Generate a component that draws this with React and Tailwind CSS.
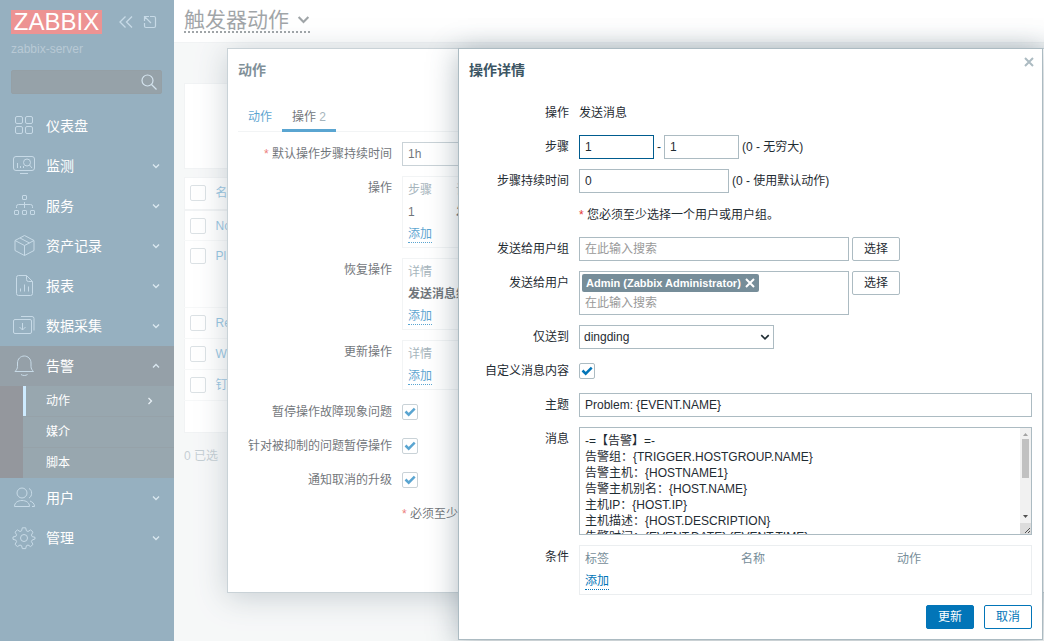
import clsx from "clsx";

const MENU = [
  { id: "dashboard", label: "仪表盘" },
  { id: "monitoring", label: "监测", expandable: true },
  { id: "services", label: "服务", expandable: true },
  { id: "inventory", label: "资产记录", expandable: true },
  { id: "reports", label: "报表", expandable: true },
  { id: "collection", label: "数据采集", expandable: true },
  {
    id: "alerts",
    label: "告警",
    expandable: true,
    children: ["动作", "媒介", "脚本"],
  },
  { id: "users", label: "用户", expandable: true },
  { id: "admin", label: "管理", expandable: true },
];

const ACTION_ROWS = [
  { name: "No" },
  { name: "Pl", tall: true },
  { name: "Re" },
  { name: "W" },
  { name: "钉" },
];

const MESSAGE = `-=【告警】=-
告警组：{TRIGGER.HOSTGROUP.NAME}
告警主机：{HOSTNAME1}
告警主机别名：{HOST.NAME}
主机IP：{HOST.IP}
主机描述：{HOST.DESCRIPTION}
告警时间：{EVENT.DATE} {EVENT.TIME}




`;

const INPUT = "h-6 border border-[#acbbc2] bg-white px-[5px] outline-none";

const ICON_SHAPES = {
  dashboard: (
    <>
      <rect x="3.5" y="2.5" width="7" height="7" rx="1.5" />
      <rect x="13.5" y="2.5" width="7" height="7" rx="1.5" />
      <rect x="3.5" y="12.5" width="7" height="7" rx="1.5" />
      <rect x="13.5" y="12.5" width="7" height="7" rx="1.5" />
    </>
  ),
  monitoring: (
    <>
      <rect x="1.5" y="2.5" width="21" height="14" rx="2.5" />
      <circle cx="15" cy="8.5" r="3.5" />
      <path d="M17.5 11l2.5 3M5.500 9v5M8.500 12v2M11.500 12v2M8 19.500h8" />
    </>
  ),
  services: (
    <>
      <rect x="10.5" y="1.500" width="4" height="4" rx="0.5" />
      <rect x="2.5" y="16.500" width="4" height="4" rx="0.5" />
      <rect x="10.5" y="16.500" width="4" height="4" rx="0.5" />
      <rect x="18.5" y="16.500" width="4" height="4" rx="0.5" />
      <path d="M12.500 8v6M4.500 14v-1.500a2 2 0 0 1 2-2h12a2 2 0 0 1 2 2V14" />
    </>
  ),
  inventory: (
    <path d="M12.500 1.500l9.500 5v10l-9.500 5-9.500-5v-10zM3 6.500l9.500 5 9.500-5M12.500 11.500v10M8 4l9.500 5" />
  ),
  reports: (
    <>
      <path d="M6.500 1.500h8l6 6v12a2 2 0 0 1-2 2h-12a2 2 0 0 1-2-2v-16a2 2 0 0 1 2-2z" />
      <path d="M14.500 1.500v4a2 2 0 0 0 2 2h4M8.500 14.500v3M12.500 10.500v7M16.500 12.500v5" />
    </>
  ),
  collection: (
    <>
      <rect x="1.500" y="5.500" width="18" height="14" rx="1.500" />
      <path d="M9 2.500h11a2 2 0 0 1 2 2v12M10.500 9v7M7.500 13l3 3 3-3" />
    </>
  ),
  alerts: (
    <path d="M3 17.500h18.500c-1.500-1.500-2.500-3-2.500-5V9c0-4-3-7-6.750-7S5.500 5 5.500 9v3.500c0 2-1 3.500-2.500 5zM9 20.500c1.500 1.300 5 1.300 6.500 0" />
  ),
  users: (
    <>
      <circle cx="10" cy="7" r="5" />
      <path d="M2.500 20.500h15c0-4-3.500-6-7.500-6s-7.500 2-7.500 6zM17 2.500c3.500 1.500 3.500 8 0 9.500M18 15c2.500 1 4.500 2.500 4.500 5.500h-2.500" />
    </>
  ),
  admin: (
    <>
      <circle cx="12" cy="12" r="3.500" />
      <path d="M10.300 1.800h3.400l.7 3 1.600.7 2.700-1.600 2.300 2.300L19.400 9l.7 1.600 2.900.7v1.600l-2.900 1.200-.7 1.500 1.600 2.700-2.400 2.300-2.600-1.600-1.600.7-.7 2.900h-3.400l-.7-2.900-1.600-.7-2.600 1.600L3 18.300l1.600-2.700-.7-1.500L1 13.300v-2.300l2.900-.7L4.600 8.800 3 6.200l2.400-2.300L8 5.500l1.600-.7z" />
    </>
  ),
};

function MenuIcon({ name }) {
  return (
    <svg
      viewBox="0 0 24 24"
      className="size-6 shrink-0 fill-none stroke-[#7daac8]"
      strokeLinejoin="round"
      aria-hidden="true"
    >
      {ICON_SHAPES[name]}
    </svg>
  );
}

function Chevron({ className }) {
  return (
    <svg
      viewBox="0 0 8 8"
      className={clsx("fill-none stroke-current", className)}
      strokeWidth="1.3"
      aria-hidden="true"
    >
      <path d="M1 2.500l3 3 3-3" />
    </svg>
  );
}

function Checkbox({ checked = false, ...props }) {
  return (
    <span className="grid size-4 shrink-0">
      <input
        type="checkbox"
        defaultChecked={checked}
        className="peer col-start-1 row-start-1 size-4 appearance-none rounded-xs border border-[#acbbc2] bg-white"
        {...props}
      />
      <svg
        viewBox="0 0 16 16"
        className="pointer-events-none invisible col-start-1 row-start-1 size-4 fill-none stroke-[#0275b8] peer-checked:visible"
        strokeWidth="2.500"
        aria-hidden="true"
      >
        <path d="M3.500 7.500l3.200 3.200 6-6" />
      </svg>
    </span>
  );
}

function Sidebar() {
  return (
    <aside className="flex w-[174px] shrink-0 flex-col bg-[#0a466a] text-white">
      <div className="flex items-center px-[11px] pt-[10px]">
        <a
          href="#home"
          className="flex h-6 w-[91px] items-center justify-center bg-[#d40000] text-2xl leading-6"
        >
          ZABBIX
        </a>
        <button type="button" className="ml-4" aria-label="收起菜单">
          <svg viewBox="0 0 16 16" className="size-4 fill-none stroke-[#7daac8]" strokeWidth="1.300">
            <path d="M7.500 2.500L2 8l5.500 5.500M14 2.500L8.500 8l5.500 5.500" />
          </svg>
        </button>
        <button type="button" className="ml-2" aria-label="隐藏菜单">
          <svg viewBox="0 0 16 16" className="size-4 fill-none stroke-[#7daac8]" strokeWidth="1.200">
            <path d="M8 2.500h4a1.500 1.500 0 0 1 1.500 1.500v8a1.500 1.500 0 0 1-1.500 1.500H4a1.500 1.500 0 0 1-1.500-1.500V9M9 9L3 3M2.500 7V2.500H7" />
          </svg>
        </button>
      </div>
      <div className="mt-[7px] px-[11px] text-[#59829e]">zabbix-server</div>
      <form className="mt-[13px] mr-3 mb-3 ml-[11px] flex h-6 items-center rounded-xs border border-[#05202f] bg-[#082436] pr-1">
        <input type="text" aria-label="搜索" className="min-w-0 flex-1 bg-transparent px-2 outline-none" />
        <button type="button" aria-label="搜索">
          <svg viewBox="0 0 16 16" className="size-4 fill-none stroke-[#9cc0d8]" strokeWidth="1.200">
            <circle cx="6.500" cy="6.500" r="5.500" />
            <path d="M10.500 10.500l5 5" />
          </svg>
        </button>
      </form>
      <nav>
        <ul>
          {MENU.map((item) => (
            <li key={item.id}>
              <a
                href={`#${item.id}`}
                className={clsx(
                  "flex h-10 items-center pr-[14px] pl-3 text-sm",
                  item.children && "bg-[#072134]"
                )}
              >
                <MenuIcon name={item.id} />
                <span className="ml-2.5 flex-1">{item.label}</span>
                {item.expandable && (
                  <Chevron className={clsx("size-2 text-[#a9c9dd]", item.children && "rotate-180")} />
                )}
              </a>
              {item.children && (
                <ul className="divide-y divide-[#0a2436] border-l-[23px] border-[#040b19] bg-[#0e3144]">
                  {item.children.map((child, index) => (
                    <li key={child}>
                      <a
                        href={`#${item.id}-${index}`}
                        className={clsx(
                          "flex h-[30px] items-center border-l-3 pr-5 pl-5",
                          index === 0 ? "border-[#8cd2ff]" : "border-transparent"
                        )}
                      >
                        <span className="flex-1">{child}</span>
                        {index === 0 && <Chevron className="size-2 -rotate-90 text-[#c9dde9]" />}
                      </a>
                    </li>
                  ))}
                </ul>
              )}
            </li>
          ))}
        </ul>
      </nav>
    </aside>
  );
}

function ActionsPage() {
  return (
    <main className="min-w-0 flex-1">
      <header className="flex h-[43px] items-start border-b border-[#dfe4e7] bg-white px-[10px] pt-2">
        <button
          type="button"
          className="flex h-[25px] items-center gap-2 border-b-2 border-dotted border-[#1f2c33] text-[21px]"
        >
          <h1>触发器动作</h1>
          <Chevron className="size-[13px]" />
        </button>
      </header>
      <div className="px-[10px] pt-10">
        <div className="h-[86px] border border-[#dfe4e7] bg-white" />
        <table className="mt-2 w-full border border-[#dfe4e7] bg-white text-left">
          <thead>
            <tr className="h-8 border-b-2 border-[#dfe4e7] text-[#0275b8]">
              <th className="w-[26px] pl-[5px] font-normal">
                <Checkbox aria-label="全选" />
              </th>
              <th className="pl-[5px] font-normal">名称</th>
            </tr>
          </thead>
          <tbody>
            {ACTION_ROWS.map((row) => (
              <tr
                key={row.name}
                className={clsx(
                  "border-b border-[#ebeef0] align-top text-[#0275b8]",
                  row.tall ? "h-[67px]" : "h-[31px]"
                )}
              >
                <td className="pt-[7px] pl-[5px]">
                  <Checkbox aria-label={row.name} />
                </td>
                <td className="pt-[7px] pl-[5px]">{row.name}</td>
              </tr>
            ))}
            <tr className="h-8">
              <td colSpan={2} />
            </tr>
          </tbody>
        </table>
        <div className="mt-[15px] text-[#768d99]">0 已选</div>
      </div>
    </main>
  );
}

function Overlay() {
  return <div className="absolute inset-0 bg-white/35" />;
}

function Dialog({ title, className, children }) {
  return (
    <section
      role="dialog"
      aria-label={title}
      className={clsx(
        "absolute top-12 border border-[#acbbc2] bg-white px-[10px] pt-[11px] pb-[10px] shadow-[0_4px_28px_rgba(60,85,99,0.4)]",
        className
      )}
    >
      <h4 className="text-sm leading-5 font-bold text-[#3c5563]">{title}</h4>
      {children}
    </section>
  );
}

function Row({ label, htmlFor, required, children }) {
  return (
    <>
      <label htmlFor={htmlFor} className="text-right leading-6">
        {required && <span className="text-[#e33734]">* </span>}
        {label}
      </label>
      <div className="flex min-h-6 min-w-0 items-center gap-[3px]">{children}</div>
    </>
  );
}

function OperationsTable({ columns, rows = [] }) {
  return (
    <div className="flex-1 border border-[#ebeef0] px-[5px] py-0.5">
      <table className="w-full table-fixed text-left leading-4">
        <thead>
          <tr className="h-[22px] text-[#768d99]">
            {columns.map((column) => (
              <th key={column.label} className={clsx("font-normal whitespace-nowrap", column.className)}>
                {column.label}
              </th>
            ))}
          </tr>
        </thead>
        <tbody>
          {rows.map((cells) => (
            <tr key={cells.join()} className="h-[22px]">
              {cells.map((cell, index) => (
                <td
                  key={cell}
                  className={clsx("whitespace-nowrap", index === cells.length - 1 && "font-bold")}
                >
                  {cell}
                </td>
              ))}
            </tr>
          ))}
          <tr className="h-[22px]">
            <td>
              <button type="button" className="border-b border-dotted border-[#0275b8] leading-[15px] text-[#0275b8]">
                添加
              </button>
            </td>
          </tr>
        </tbody>
      </table>
    </div>
  );
}

function ActionDialog() {
  return (
    <Dialog title="动作" className="left-[227px] w-[827px]">
      <div className="mt-[21px] flex border-b border-[#ebeef0]">
        <a href="#action" className="px-[10px] pt-2 pb-1.5 leading-4 text-[#0275b8]">
          动作
        </a>
        <a href="#operations" className="-mb-px border-b-3 border-[#0275b8] px-[10px] pt-2 pb-1 leading-4">
          操作 <span className="text-[#768d99]">2</span>
        </a>
      </div>
      <form className="mt-[10px] grid grid-cols-[154px_1fr] gap-[10px]">
        <Row label="默认操作步骤持续时间" htmlFor="default-duration" required>
          <input id="default-duration" defaultValue="1h" className={clsx(INPUT, "w-[150px]")} />
        </Row>
        <Row label="操作">
          <OperationsTable
            columns={[
              { label: "步骤", className: "w-12" },
              { label: "详情" },
            ]}
            rows={[["1", "发"]]}
          />
        </Row>
        <Row label="恢复操作">
          <OperationsTable columns={[{ label: "详情" }]} rows={[["发送消息给"]]} />
        </Row>
        <Row label="更新操作">
          <OperationsTable columns={[{ label: "详情" }]} />
        </Row>
        <Row label="暂停操作故障现象问题" htmlFor="pause-symptoms">
          <Checkbox id="pause-symptoms" checked />
        </Row>
        <Row label="针对被抑制的问题暂停操作" htmlFor="pause-suppressed">
          <Checkbox id="pause-suppressed" checked />
        </Row>
        <Row label="通知取消的升级" htmlFor="notify-canceled">
          <Checkbox id="notify-canceled" checked />
        </Row>
        <p className="col-start-2 leading-6">
          <span className="text-[#e33734]">*</span> 必须至少
        </p>
      </form>
      <div className="mt-8 flex justify-end">
        <button type="button" className="h-6 w-12 rounded-xs border border-[#0275b8] text-[#0275b8]">
          取消
        </button>
      </div>
    </Dialog>
  );
}

function SelectButton({ label }) {
  return (
    <button
      type="button"
      aria-label={label}
      className="h-6 w-12 shrink-0 self-start rounded-xs border border-[#acbbc2] bg-white"
    >
      选择
    </button>
  );
}

function ScrollTrack() {
  return (
    <div className="flex w-[11px] flex-col items-center bg-[#f1f1f1]" aria-hidden="true">
      <svg viewBox="0 0 11 11" className="h-[11px] w-[11px] shrink-0 fill-[#a3a3a3]">
        <path d="M3 8l2.500-3L8 8z" />
      </svg>
      <div className="h-[39px] w-[7px] bg-[#c1c1c1]" />
      <svg viewBox="0 0 11 11" className="mt-auto h-[11px] w-[11px] shrink-0 fill-[#505050]">
        <path d="M3 3l2.500 3L8 3z" />
      </svg>
      <svg viewBox="0 0 11 11" className="h-[11px] w-[11px] shrink-0 bg-[#dcdcdc] stroke-[#505050]">
        <path d="M5 10l5-5M8 10l2-2" />
      </svg>
    </div>
  );
}

function OperationDialog() {
  return (
    <Dialog title="操作详情" className="right-px w-[585px]">
      <button type="button" aria-label="关闭" className="absolute top-2 right-2 text-[#acbbc2]">
        <svg viewBox="0 0 10 10" className="size-[10px] fill-none stroke-current" strokeWidth="2">
          <path d="M1 1l8 8M9 1L1 9" />
        </svg>
      </button>
      <form className="mt-[21px] grid grid-cols-[100px_1fr] gap-[10px]">
        <Row label="操作">发送消息</Row>
        <Row label="步骤" htmlFor="step-from">
          <input id="step-from" defaultValue="1" className="h-6 w-[75px] border border-[#005c8f] bg-white px-[5px] outline-none" />
          -
          <input aria-label="步骤至" defaultValue="1" className={clsx(INPUT, "w-[75px]")} />
          (0 - 无穷大)
        </Row>
        <Row label="步骤持续时间" htmlFor="step-duration">
          <input id="step-duration" defaultValue="0" className={clsx(INPUT, "w-[150px]")} />
          (0 - 使用默认动作)
        </Row>
        <p className="col-start-2 leading-6">
          <span className="text-[#e33734]">*</span> 您必须至少选择一个用户或用户组。
        </p>
        <Row label="发送给用户组" htmlFor="user-groups">
          <input
            id="user-groups"
            placeholder="在此输入搜索"
            className={clsx(INPUT, "w-[270px] placeholder:text-[#999]")}
          />
          <SelectButton label="选择用户组" />
        </Row>
        <Row label="发送给用户" htmlFor="users-search">
          <div className="flex h-11 w-[270px] flex-col items-start border border-[#acbbc2] pt-0.5 pl-0.5">
            <span className="flex h-[18px] items-center gap-1 rounded-xs bg-[#768d99] px-1 text-[11px] font-bold text-white">
              Admin (Zabbix Administrator)
              <button type="button" aria-label="移除">
                <svg viewBox="0 0 10 10" className="size-[10px] fill-none stroke-current" strokeWidth="2">
                  <path d="M1 1l8 8M9 1L1 9" />
                </svg>
              </button>
            </span>
            <input
              id="users-search"
              placeholder="在此输入搜索"
              className="h-[22px] w-full px-[3px] outline-none placeholder:text-[#999]"
            />
          </div>
          <SelectButton label="选择用户" />
        </Row>
        <Row label="仅送到" htmlFor="media-type">
          <div className="grid w-[195px] items-center">
            <select
              id="media-type"
              className="col-start-1 row-start-1 h-6 appearance-none border border-[#acbbc2] bg-white px-1 outline-none"
            >
              <option>dingding</option>
            </select>
            <Chevron className="pointer-events-none col-start-1 row-start-1 mr-1 size-[10px] justify-self-end" />
          </div>
        </Row>
        <Row label="自定义消息内容" htmlFor="custom-message">
          <Checkbox id="custom-message" checked />
        </Row>
        <Row label="主题" htmlFor="subject">
          <input id="subject" defaultValue="Problem: {EVENT.NAME}" className={clsx(INPUT, "w-full")} />
        </Row>
        <Row label="消息" htmlFor="message">
          <div className="flex h-[108px] w-full border border-[#acbbc2]">
            <textarea
              id="message"
              defaultValue={MESSAGE}
              className="min-w-0 flex-1 resize-none px-[5px] py-[5px] leading-4 outline-none [scrollbar-width:none]"
            />
            <ScrollTrack />
          </div>
        </Row>
        <Row label="条件">
          <OperationsTable
            columns={[{ label: "标签", className: "w-[156px]" }, { label: "名称", className: "w-[156px]" }, { label: "动作" }]}
          />
        </Row>
      </form>
      <div className="mt-[10px] flex justify-end gap-[10px]">
        <button type="button" className="h-6 w-12 rounded-xs border border-[#0275b8] bg-[#0275b8] text-white">
          更新
        </button>
        <button type="button" className="h-6 w-12 rounded-xs border border-[#0275b8] text-[#0275b8]">
          取消
        </button>
      </div>
    </Dialog>
  );
}

export default function App() {
  return (
    <div className="relative flex min-h-screen overflow-hidden bg-[#ebeef0] font-['Liberation_Sans','Noto_Sans_CJK_SC',sans-serif] text-xs text-[#1f2c33]">
      <Sidebar />
      <ActionsPage />
      <Overlay />
      <ActionDialog />
      <Overlay />
      <OperationDialog />
    </div>
  );
}
